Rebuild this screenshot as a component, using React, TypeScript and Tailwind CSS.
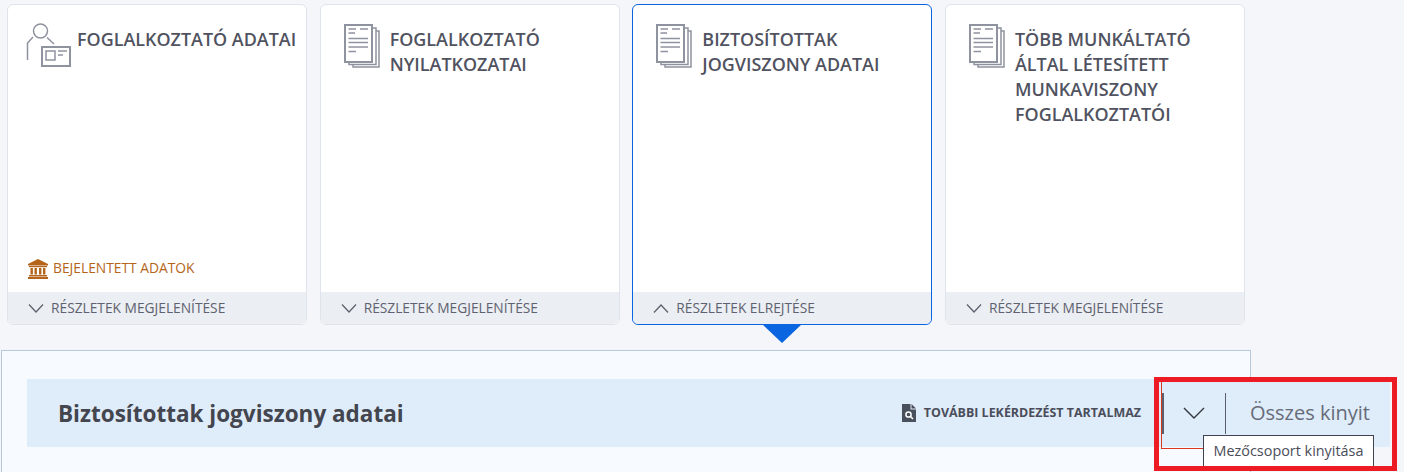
function PersonIcon() {
  return (
    <svg width="46" height="45" viewBox="0 0 46 45" fill="none" stroke="#8e939f" className="shrink-0">
      <circle cx="14.5" cy="8" r="7" strokeWidth="1.5" />
      <path d="M7 14 L1.5 20 V37" strokeWidth="1.5" />
      <path d="M21 14.5 L28 21" strokeWidth="1.5" />
      <rect x="16" y="24" width="28" height="19" strokeWidth="2" fill="#fff" />
      <rect x="20" y="28" width="9" height="9" strokeWidth="1.5" />
      <path d="M32 28 H41 M32 32 H37" strokeWidth="1.5" />
    </svg>
  );
}

function DocsIcon() {
  return (
    <svg width="36" height="45" viewBox="0 0 36 45" fill="none" stroke="#8e939f" className="shrink-0">
      <path d="M32 8 H35 V44 H9 V41" strokeWidth="1.5" />
      <path d="M29 5 H32 V41.5 H5 V38" strokeWidth="1.5" />
      <rect x="1" y="2" width="27" height="37" strokeWidth="2" fill="#fff" />
      <path d="M4.5 6 H12 M16 6 H24 M4.5 10 H11 M4.5 15.5 H24 M4.5 19.5 H24 M4.5 24 H24 M4.5 28.5 H12" strokeWidth="1.6" />
    </svg>
  );
}

function BankIcon() {
  return (
    <svg width="20" height="20" viewBox="0 0 20 20" fill="#b4651a" className="shrink-0">
      <path d="M10 0 L20 5 V6.5 H0 V5 Z" />
      <rect x="1" y="7" width="18" height="1.2" />
      <rect x="2.5" y="9" width="2.4" height="6.5" />
      <rect x="6.5" y="9" width="2.4" height="6.5" />
      <rect x="11" y="9" width="2.4" height="6.5" />
      <rect x="15" y="9" width="2.4" height="6.5" />
      <rect x="1" y="16" width="18" height="1.5" />
      <rect x="0" y="18" width="20" height="2" />
    </svg>
  );
}

function Chevron({ up = false }: { up?: boolean }) {
  return (
    <svg width="16" height="9" viewBox="0 0 16 9" fill="none" stroke="#5a5f6b" strokeWidth="1.2" className="shrink-0">
      <path d={up ? "M1 8.5 L8 1 L15 8.5" : "M1 0.5 L8 8 L15 0.5"} />
    </svg>
  );
}

function Card({
  title,
  icon,
  active,
  status,
}: {
  title: string[];
  icon: "person" | "docs";
  active?: boolean;
  status?: boolean;
}) {
  return (
    <div
      className={`relative flex h-[321px] w-[300px] flex-col rounded-md border bg-white ${
        active ? "border-[#0a66e0]" : "border-[#dfe4ec]"
      }`}
    >
      <div className="flex flex-1 items-start px-[18px] pt-[18px]">
        {icon === "person" ? (
          <PersonIcon />
        ) : (
          <div className="ml-[5px]">
            <DocsIcon />
          </div>
        )}
        <div
          className={`pt-[4px] text-[17.95px] leading-[25px] font-semibold text-[#50535f] ${
            icon === "person" ? "ml-[5px] whitespace-nowrap" : "ml-[10px]"
          }`}
        >
          {title.map((line) => (
            <div key={line}>{line}</div>
          ))}
        </div>
      </div>
      {status && (
        <div className="mb-[13px] flex items-center gap-[5px] pl-[20px] text-[13.8px] text-[#b4651a]">
          <BankIcon />
          <span>BEJELENTETT ADATOK</span>
        </div>
      )}
      <div className="flex h-[32px] items-center gap-[7px] rounded-b-md bg-[#ebeef2] pl-[20px] text-[13.75px] text-[#5e6270]">
        <Chevron up={active} />
        <span>{active ? "RÉSZLETEK ELREJTÉSE" : "RÉSZLETEK MEGJELENÍTÉSE"}</span>
      </div>
      {active && (
        <div className="absolute top-full left-[129px] h-0 w-0 border-x-[20px] border-t-[19px] border-x-transparent border-t-[#0a66e0]" />
      )}
    </div>
  );
}

export default function App() {
  return (
    <div className="relative h-[472px] w-[1404px] overflow-hidden bg-[#f4f6fa] font-['Open_Sans',sans-serif]">
      <div className="flex gap-[12.67px] pt-[4px] pl-[7px]">
        <Card title={["FOGLALKOZTATÓ ADATAI"]} icon="person" status />
        <Card title={["FOGLALKOZTATÓ", "NYILATKOZATAI"]} icon="docs" />
        <Card title={["BIZTOSÍTOTTAK", "JOGVISZONY ADATAI"]} icon="docs" active />
        <Card title={["TÖBB MUNKÁLTATÓ", "ÁLTAL LÉTESÍTETT", "MUNKAVISZONY", "FOGLALKOZTATÓI"]} icon="docs" />
      </div>

      <div className="mt-[25px] ml-px h-[200px] w-[1250px] border border-[#b7c8dc] bg-[#f7fafe] pt-[28px] pl-[25px]">
        <div className="flex h-[68px] w-[1363px] items-center bg-[#dfecfa] pl-[31px]">
          <h2 className="mt-px text-[22.5px] font-bold text-[#43454f]">Biztosítottak jogviszony adatai</h2>
          <div className="ml-auto flex items-center">
            <svg width="14" height="18" viewBox="0 0 14 18" className="shrink-0">
              <path d="M0 0 H8.5 V5.5 H14 V18 H0 Z" fill="#4a4f5c" />
              <path d="M9.5 0 L14 4.5 H9.5 Z" fill="#4a4f5c" />
              <circle cx="6.5" cy="10.5" r="2.6" fill="none" stroke="#fff" strokeWidth="1.5" />
              <path d="M8.5 12.5 L11 15" stroke="#fff" strokeWidth="1.6" />
            </svg>
            <span className="ml-[8px] text-[12.45px] font-bold text-[#4a4d59]">TOVÁBBI LEKÉRDEZÉST TARTALMAZ</span>
            <div className="ml-[20px] h-[41px] w-[3px] bg-[#5c606c]" />
            <div className="flex w-[61px] justify-center pr-[2px]">
              <svg width="22" height="12" viewBox="0 0 22 12" fill="none" stroke="#33363f" strokeWidth="1.4">
                <path d="M1 1 L11 11 L21 1" />
              </svg>
            </div>
            <div className="h-[41px] w-px bg-[#5c606c]" />
            <span className="ml-[24px] w-[140px] text-[20px] text-[#666b78]">Összes kinyit</span>
          </div>
        </div>
      </div>

      {/* annotation drawn over the screenshot */}
      <div className="absolute top-[377px] left-[1154px] h-[94px] w-[243px] border-[5px] border-[#ed1c24]" />
      <div className="absolute top-[382px] left-[1161px] h-[67px] w-[43px] border-b border-l border-[#d9381e]" />
      <div className="absolute top-[435px] left-[1203px] flex h-[31px] w-[171px] items-center justify-center border border-b-0 border-[#3f4350] bg-white text-[14.4px] text-[#4a4d59]">
        Mezőcsoport kinyitása
      </div>
    </div>
  );
}
